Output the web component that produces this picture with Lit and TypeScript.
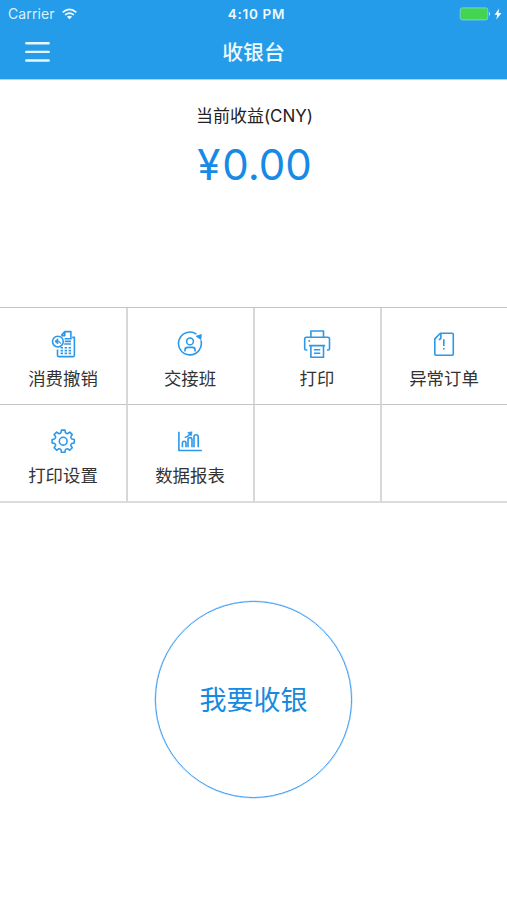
import { LitElement, html, svg, css, nothing } from "lit";
import { customElement } from "lit/decorators.js";

const gearPath = (() => {
  const pts: string[] = [];
  const c = 14.2;
  for (let i = 0; i < 8; i++) {
    const a = (i * Math.PI) / 4 - Math.PI / 2;
    const p = (r: number, d: number) =>
      `${(c + r * Math.cos(a + d)).toFixed(2)} ${(c + r * Math.sin(a + d)).toFixed(2)}`;
    pts.push(`${i ? "L" : "M"}${p(9, -0.24)}L${p(11.2, -0.16)}L${p(11.2, 0.16)}L${p(9, 0.24)}Q${p(7.8, 0.39)} ${p(9, 0.545)}`);
  }
  return pts.join("") + "Z";
})();

const icons = {
  refund: svg`
    <circle cx="8.9" cy="11.6" r="5.4"/>
    <path d="M5.9 11.4l3-2.6v5.2zM8.9 11.2c1.7 0 2.6.9 2.7 2.6" fill="currentColor" stroke-width=".9"/>
    <path d="M12.2 5.6l3.6-4h6.1v8M12.2 5.6h3.6v-4M15.6 8.8h6.2M15.8 11.4h6.2M15.2 14h6.8"/>
    <path d="M23.2 7.4h2.2v18.2q0 1-1 1H9.5q-1 0-1-1v-6.2"/>
    <path d="M11.6 17.8h10.4M11.6 20.6h10.4M11.6 23.4h10.4" stroke-width="1.6" stroke-dasharray="2.4 1.6"/>`,
  shift: svg`
    <path d="M20.4 4.1A11.4 11.4 0 1 0 24.9 10.4"/>
    <path d="M20.2 6.2L25.3 4.6l-.4 4.9z" fill="currentColor" stroke-width=".9"/>
    <circle cx="14" cy="11.4" r="3.4"/>
    <path d="M9 21.4v-1.5q0-2.5 2.6-2.5h4.9q2.6 0 2.6 2.5v1.5"/>`,
  print: svg`
    <path d="M7.9 7.2V1h12.6v6.2M4.3 20H3q-1.3 0-1.3-1.3V9q0-1.7 1.7-1.7h21.4q1.7 0 1.7 1.7v9.7q0 1.3-1.3 1.3h-1.3"/>
    <path d="M6.1 15.6h16M7.9 15.6v11.7h12.6V15.6M10.9 19.7h6.4M10.9 23.2h6.4"/>
    <path d="M5.3 11h1.8"/>`,
  order: svg`
    <path d="M10.4 3.2h11.7q1.2 0 1.2 1.2v19.6q0 1.2-1.2 1.2H6q-1.2 0-1.2-1.2V8.9zM10.9 3.4v4q0 2-2.2 2"/>
    <path d="M13.8 9.3v6.8M13.8 18v1.5"/>`,
  gear: svg`<path d=${gearPath}/><circle cx="14.2" cy="14.2" r="3.9"/>`,
  chart: svg`
    <path d="M2.9 4.8v18.7h23"/>
    <path d="M6.4 20.3v-4.3q0-1.7 1.8-1.7t1.8 1.7v4.3M12 20.3v-7.6q0-2.1 2-2.1t2 2.1v7.6M18 20.3V9.9q0-2.1 2.1-2.1t2.1 2.1v10.4"/>
    <path d="M8.7 10.5q3-.6 5.6-3.8"/><path d="M11.7 5.5l4.4-.7-.8 4.2z" fill="currentColor" stroke-width=".6"/>`,
};

interface Action {
  label: string;
  icon: keyof typeof icons;
}

const actions: (Action | null)[] = [
  { label: "消费撤销", icon: "refund" },
  { label: "交接班", icon: "shift" },
  { label: "打印", icon: "print" },
  { label: "异常订单", icon: "order" },
  { label: "打印设置", icon: "gear" },
  { label: "数据报表", icon: "chart" },
  null,
  null,
];

@customElement("status-bar")
export class StatusBar extends LitElement {
  static styles = css`
    :host { display: grid; grid-template-columns: 1fr auto 1fr; align-items: center; height: 27px; padding: 0 5px 0 8px; color: #fff; font-size: 14px; }
    .carrier { display: flex; align-items: center; gap: 7px; letter-spacing: 0.1px; color: #d9f1ff; }
    .time { font-size: 13.5px; font-weight: 600; letter-spacing: 0.7px; padding-left: 3px; color: #eefaff; }
    .power { display: flex; justify-content: flex-end; align-items: center; gap: 3px; }
    svg { display: block; }
  `;
  render() {
    return html`
      <div class="carrier">
        <span>Carrier</span>
        <svg width="15" height="12" viewBox="0 0 15 12" fill="none" stroke="#effaff" stroke-width="1.7">
          <path d="M.7 4.3q6.8-5.8 13.6 0M3.1 6.9q4.4-3.7 8.8 0"/>
          <path d="M4.9 8.8q2.6-2 5.2 0L7.5 11.3z" fill="#effaff" stroke="none"/>
        </svg>
      </div>
      <div class="time">4:10 PM</div>
      <div class="power">
        <svg width="32" height="14" viewBox="0 0 32 14">
          <rect x="1.2" y=".9" width="27.6" height="12" rx="2.2" fill="#43d551" stroke="#73d4cf"/>
          <path d="M30 4.8q2 2.1 0 4.2z" fill="#d5f0ff"/>
        </svg>
        <svg width="8" height="12" viewBox="0 0 8 12"><path d="M5.2 .6L.6 6.7h2.6l-.8 4.8L7.4 5.1H4.5z" fill="#fff"/></svg>
      </div>`;
  }
}

@customElement("action-tile")
export class ActionTile extends LitElement {
  static properties = { action: { attribute: false } };
  declare action: Action | null;
  static styles = css`
    :host { display: flex; flex-direction: column; align-items: center; box-sizing: border-box; padding-top: 22px; }
    svg { display: block; color: #2b98ea; flex: none; }
    .label { margin-top: 8px; font-size: 17.4px; line-height: 26px; color: #333; white-space: nowrap; }
  `;
  render() {
    if (!this.action) return nothing;
    return html`
      <svg width="28" height="28" viewBox="0 0 28 28" fill="none" stroke="currentColor" stroke-width="1.6" stroke-linejoin="round">
        ${icons[this.action.icon]}
      </svg>
      <div class="label">${this.action.label}</div>`;
  }
}

@customElement("app-root")
export class AppRoot extends LitElement {
  static styles = css`
    :host { display: flex; flex-direction: column; height: 900px; background: #fff; overflow: hidden; font-family: Inter, "Noto Sans CJK SC", sans-serif; }
    .header { height: 80px; background: #249ce9; border-bottom: 1px solid #a5d8f8; box-sizing: border-box; flex: none; }
    .nav { display: grid; grid-template-columns: 1fr auto 1fr; align-items: center; height: 51px; padding: 0 25px; }
    .menu { display: block; margin-bottom: 2px; }
    .title { font-size: 20.8px; font-weight: 500; line-height: 30px; color: #edfaff; }
    .income { height: 227px; flex: none; display: flex; flex-direction: column; align-items: center; box-sizing: border-box; padding: 23px 0 0 2px; }
    .caption { font-size: 17px; line-height: 26px; color: #222; }
    .amount { margin-top: 10px; font-size: 42px; line-height: 52px; color: #168ae6; }
    .currency { margin-right: 2px; }
    .grid { flex: none; display: grid; grid-template-columns: 128px 127px 127px 1fr; grid-template-rows: 97px 98px; border-top: 1px solid #c4c4c4; }
    .tile { border-right: 2px solid #d8d8d8; border-bottom: 1px solid #c4c4c4; }
    .tile:not(:nth-child(4n + 1)) { padding-right: 1px; }
    .tile:nth-child(4n) { border-right: none; }
    .tile:nth-child(n + 5) { border-bottom: 2px solid #dcdcdc; }
    .pay { align-self: center; margin-top: 98px; width: 197px; height: 197px; box-sizing: border-box; border: 1px solid #3f9bef; box-shadow: 0 0 0 0.5px #a5d2fa; border-radius: 50%; background: none; color: #168ae0; font: inherit; font-size: 27px; line-height: 40px; padding: 2px 0 0; flex: none; }
  `;
  render() {
    return html`
      <header class="header">
        <status-bar></status-bar>
        <nav class="nav">
          <svg class="menu" width="25" height="22" viewBox="0 0 25 22" stroke="#e6f8ff" stroke-width="2.4" stroke-linecap="round">
            <path d="M1.3 2.3h22.4M1.3 10.9h22.4M1.3 19.5h22.4"/>
          </svg>
          <div class="title">收银台</div>
        </nav>
      </header>
      <section class="income">
        <div class="caption">当前收益(CNY)</div>
        <div class="amount"><span class="currency">¥</span>0.00</div>
      </section>
      <section class="grid">
        ${actions.map((a) => html`<action-tile class="tile" .action=${a}></action-tile>`)}
      </section>
      <button class="pay">我要收银</button>`;
  }
}
